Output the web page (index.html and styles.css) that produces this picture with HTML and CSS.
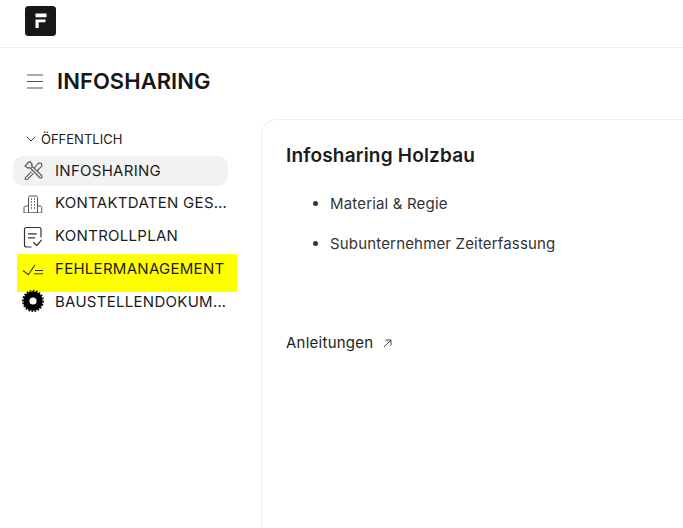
FILE: index.html
```html
<!DOCTYPE html>
<html lang="de">
<head>
<meta charset="utf-8">
<title>Infosharing</title>
<link rel="stylesheet" href="styles.css">
</head>
<body>
<header class="topbar">
  <svg class="logo" width="31" height="30" viewBox="0 0 31 30">
    <rect width="31" height="30" rx="3.500" fill="#171717"/>
    <path d="M10.500 7.500h11v3.700h-11zM10.500 13.500h10v2.800h-6.800v5.700h-3.200z" fill="#fff"/>
  </svg>
</header>
<div class="pagehead">
  <svg class="burger" width="16" height="15" viewBox="0 0 16 15" fill="none" stroke="#555" stroke-width="1.100">
    <path d="M0 1h16M0 7.500h16M0 14h16"/>
  </svg>
  <h1 class="title">INFOSHARING</h1>
</div>
<div class="layout">
  <aside class="sidebar">
    <div class="section">
      <svg width="10" height="6" viewBox="0 0 10 6" fill="none" stroke="#444" stroke-width="1"><path d="M.7.7 5 5l4.300-4.300"/></svg>
      <span>ÖFFENTLICH</span>
    </div>
    <nav class="nav">
      <a class="item active">
        <svg class="icon" width="20" height="20" viewBox="0 0 20 20" fill="none" stroke="#555" stroke-width="1.100" stroke-linejoin="round">
          <path d="M2 6 6.500 1.500l2.800 2.800-1 1 1.400 1.400-2 2-1.400-1.400-1 1z"/>
          <path d="M8.300 9 16.600 17.500a1.400 1.400 0 0 0 2-2L10.100 7.200"/>
          <path d="M11 8.500 15.500 3l3 .2.300 3-5 4.800"/>
          <path d="M8.500 11.600 2.500 17.600a1.300 1.300 0 0 0 1.900 1.800l6-6"/>
        </svg>
        <span class="label">INFOSHARING</span>
      </a>
      <a class="item">
        <svg class="icon" width="20" height="20" viewBox="0 0 20 20" fill="none" stroke="#555" stroke-width="1">
          <path d="M5.500 20V4.500q0-1.500 1.500-1.500h6q1.500 0 1.500 1.500V20z"/>
          <path d="M5.500 13H2.500q-1.500 0-1.500 1.500V20h17.700v-5.500q0-1.500-1.500-1.500h-2.700"/>
          <path d="M8 6h1M11 6h1M8 9h1M11 9h1M8 12h1M11 12h1M8 15h1M11 15h1" stroke-width="1.300"/>
        </svg>
        <span class="label">KONTAKTDATEN GESAMT</span>
      </a>
      <a class="item">
        <svg class="icon" width="20" height="24" viewBox="0 0 20 24" fill="none" stroke="#333" stroke-width="1.200" stroke-linejoin="round">
          <path d="M8.500 23H3.500q-2 0-2-2V5.500q0-2 2-2h12.500q2 0 2 2v7.700"/>
          <path d="M5 9.800h8.700M5 13.800h7"/>
          <path d="m10.300 18.200 3.400 3.300 5-5.700"/>
        </svg>
        <span class="label">KONTROLLPLAN</span>
      </a>
      <a class="item marked">
        <svg class="icon" width="20" height="20" viewBox="0 0 20 20" fill="none" stroke="#333" stroke-width="1.100">
          <path d="m0 12.500 5.300 4.300L12 6.800"/>
          <path d="M12 12.500h8M11 15.800h9"/>
        </svg>
        <span class="label">FEHLERMANAGEMENT</span>
      </a>
      <a class="item">
        <svg class="icon gear" width="24" height="24" viewBox="0 0 24 24">
          <circle cx="12" cy="12" r="9.800" fill="#000"/>
          <circle cx="12" cy="12" r="10.300" fill="none" stroke="#000" stroke-width="1.400" stroke-dasharray="1.700 1.500"/>
          <circle cx="12" cy="12" r="3.600" fill="#fff"/>
        </svg>
        <span class="label">BAUSTELLENDOKUMENTATION</span>
      </a>
    </nav>
  </aside>
  <main class="card">
    <h2 class="card-title">Infosharing Holzbau</h2>
    <ul class="links">
      <li>Material &amp; Regie</li>
      <li>Subunternehmer Zeiterfassung</li>
    </ul>
    <a class="external">
      <span>Anleitungen</span>
      <svg width="9" height="9" viewBox="0 0 9 9" fill="none" stroke="#444" stroke-width="1"><path d="M1 8 8 1M2.500 1H8v5.500"/></svg>
    </a>
  </main>
</div>
</body>
</html>
```
FILE: styles.css
```css
* { box-sizing: border-box; }
html, body { margin: 0; height: 100%; overflow: hidden; }
body { background: #fff; color: #171717; font-family: Inter, "Liberation Sans", sans-serif; }

.topbar { height: 48px; padding: 6px 0 0 25px; border-bottom: 1px solid #ededed; }
.logo { display: block; }

.pagehead { display: flex; align-items: center; gap: 14px; height: 71px; padding: 0 0 5px 27px; }
.burger { flex: none; }
.title { margin: 0; font-size: 22px; line-height: 28px; font-weight: 600; letter-spacing: .05px; }

.layout { display: flex; height: 409px; }
.sidebar { flex: none; width: 261px; padding: 11px 33px 0 13px; }
.section { display: flex; align-items: center; gap: 5px; height: 17px; padding-left: 13px; font-size: 13px; color: #222; }

.nav { display: flex; flex-direction: column; gap: 2.750px; margin-top: 9px; }
.item { position: relative; display: flex; align-items: center; height: 30px; border-radius: 10px; padding: 0 0 2px 10px; font-size: 15px; letter-spacing: .28px; color: #1c1c1c; }
.item.active { background: #f2f2f2; }
.item.marked::before { content: ""; position: absolute; left: 4px; right: -9px; top: 0; height: 38px; background: #ffff00; }
.icon { position: relative; flex: none; margin-right: 12px; }
.gear { margin: 0 10px 0 -2px; }
.label { position: relative; overflow: hidden; white-space: nowrap; text-overflow: ellipsis; }

.card { flex: 1; border: 1px solid #ededed; border-right: 0; border-bottom: 0; border-top-left-radius: 16px; padding: 24px 24px 0; }
.card-title { margin: 0; font-size: 19px; line-height: 24px; font-weight: 600; letter-spacing: .2px; color: #1c1c1c; }
.links { margin: 26px 0 0; padding-left: 44px; font-size: 15px; line-height: 20px; letter-spacing: .17px; color: #333; }
.links li + li { margin-top: 20px; }
.external { display: flex; align-items: center; gap: 10px; margin-top: 79px; font-size: 15px; line-height: 20px; font-weight: 400; letter-spacing: .25px; color: #1c1c1c; }
```
